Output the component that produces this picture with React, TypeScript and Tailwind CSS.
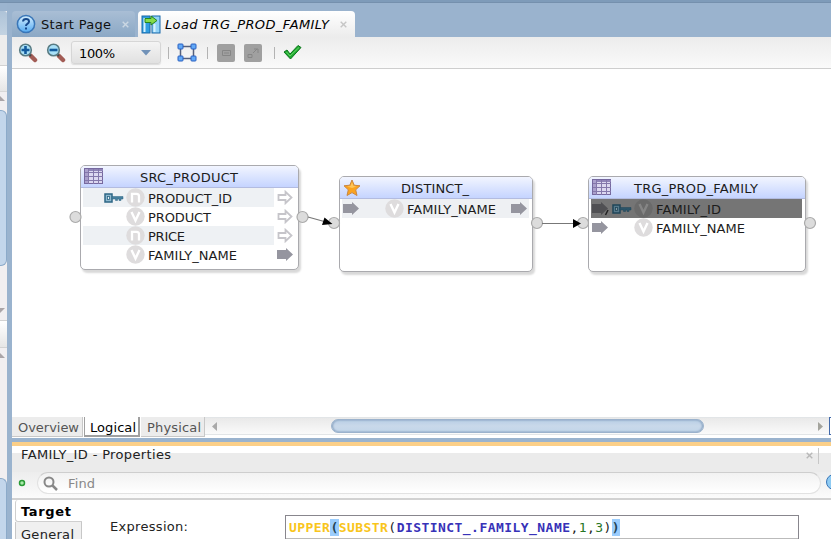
import type { ReactNode } from "react";

type TProps = { children: ReactNode; w: number; className?: string };

/* Single line label scaled to an exact advance width */
function Label({ children, w, className = "" }: TProps) {
  return (
    <svg width={w} height="20" className={`block shrink-0 overflow-visible ${className}`}>
      <text x="0" y="15" textLength={w} lengthAdjust="spacing" fill="currentColor">
        {children}
      </text>
    </svg>
  );
}

function TableIcon() {
  return (
    <svg width="20" height="17" viewBox="0 0 20 17" className="block">
      <rect x=".5" y=".5" width="18" height="15" fill="#dcd8f0" stroke="#76699f" />
      <rect x="1" y="1" width="18" height="2" fill="#9085b8" />
      <rect x="1" y="1" width="3" height="14" fill="#aaa0cc" />
      <path d="M4.500 1v15M9.500 1v15M14.500 1v15M1 4.500h18M1 8.500h18M1 12.500h18" stroke="#8478ab" />
    </svg>
  );
}

function Star() {
  return (
    <svg width="18" height="18" viewBox="0 0 18 18" className="block">
      <path d="M9 1l2.200 5.200 5.800.6-4.300 4 1.300 5.700L9 13.600 4 16.500l1.300-5.700L1 6.800l5.800-.6z" fill="#fba31f" stroke="#c98743" strokeWidth="1" />
      <path d="M9 3l1.500 4 3 .5L9 9 4 7.500 7.500 7z" fill="#ffc65a" />
    </svg>
  );
}

function Arrow({ hollow = false, dark = false }: { hollow?: boolean; dark?: boolean }) {
  return (
    <svg width="17" height="15" viewBox="0 0 17 15" className="block">
      {hollow ? (
        <path d="M1.500 5h7V1.800L14.500 7.500l-6 5.700V10h-7z" fill="#fff" stroke="#c6c5ca" strokeWidth="1.800" />
      ) : (
        <path d="M0 3h9V1l7 6.500L9 14v-2H0z" fill={dark ? "#505053" : "#95959f"} />
      )}
      {dark && <path d="M16 9l-2.500 5" stroke="#222" strokeWidth="1.500" />}
    </svg>
  );
}

function KeyIcon({ dark = false }: { dark?: boolean }) {
  const line = dark ? "#1f4558" : "#2c6685";
  return (
    <svg width="20" height="12" viewBox="0 0 20 12" className="block">
      <rect x="1" y="2" width="7" height="8" fill={dark ? "#55788a" : "#8eb9cf"} stroke={line} strokeWidth="1.500" />
      <rect x="3.500" y="4.500" width="2" height="3" fill={dark ? "#8a9aa2" : "#e8f3f8"} stroke={line} strokeWidth=".8" />
      <path d="M8 4.500h11v2.500h-2v1.500h-2V7h-1.500v1.500h-2V7H8z" fill={dark ? "#2c5468" : "#467f9d"} stroke={line} strokeWidth=".5" />
    </svg>
  );
}

function TypeBadge({ kind, dark = false }: { kind: "n" | "v"; dark?: boolean }) {
  return (
    <svg width="19" height="19" viewBox="0 0 19 19" className="block">
      <circle cx="9.500" cy="9.500" r="9.200" fill={dark ? "#6a6a6a" : "#dedcdd"} />
      {kind === "n" ? (
        <path d="M6 14.500V5.800h4.500q2.500 0 2.500 2.500v6.200" fill="none" stroke="#fff" strokeWidth="2.300" />
      ) : (
        <path d="M5.500 5l4 8.500 4-8.500" fill="none" stroke={dark ? "#858585" : "#fff"} strokeWidth="2.400" />
      )}
    </svg>
  );
}

type Row = {
  name: string;
  w: number;
  kind: "n" | "v";
  keyed?: boolean;
  input?: boolean;
  output?: "hollow" | "solid";
  band?: string;
  bandW?: string;
  dark?: boolean;
};

function Node({ place, title, titleW, icon, rows }: { place: string; title: string; titleW: number; icon: ReactNode; rows: Row[] }) {
  return (
    <div className={`absolute flex flex-col overflow-hidden rounded-[5px] border-[1.500px] border-[#aaaaae] bg-white shadow-[2px_3px_2px_#d9d9d9] ${place}`}>
      <div className="relative flex h-[22px] shrink-0 items-center justify-center border-b border-[#b3bce0] bg-linear-to-b from-[#f2f5ff] to-[#c5d4ff] pr-[2px]">
        <div className="absolute top-[2px] left-[3px]">{icon}</div>
        <Label w={titleW}>{title}</Label>
      </div>
      {rows.map((r) => (
        <div key={r.name} className="relative flex h-[19px] shrink-0 items-center">
          <div className={`absolute inset-y-0 left-[2px] ${r.bandW ?? "right-[3px]"} ${r.band ?? ""}`} />
          <div className="relative flex w-[67px] shrink-0 items-center justify-end">
            {r.input && <div className="mr-auto ml-[3px]"><Arrow dark={r.dark} /></div>}
            {r.keyed && <KeyIcon dark={r.dark} />}
            <div className="mr-[3px] ml-[2px]"><TypeBadge kind={r.kind} dark={r.dark} /></div>
          </div>
          <Label w={r.w} className="relative">{r.name}</Label>
          {r.output && <div className="relative mr-[4px] ml-auto"><Arrow hollow={r.output === "hollow"} /></div>}
        </div>
      ))}
    </div>
  );
}

function ZoomIcon({ plus = false }: { plus?: boolean }) {
  return (
    <svg width="20" height="20" viewBox="0 0 20 20" className="block">
      <path d="M13 13l4 4" stroke="#a25c55" strokeWidth="4.500" strokeLinecap="round" />
      <path d="M11 11l2 2" stroke="#444" strokeWidth="2" />
      <circle cx="7.500" cy="7" r="5.800" fill="#a9e1f8" stroke="#587b83" strokeWidth="1.600" />
      <path d={plus ? "M3.500 7h8M7.500 3v8" : "M3.500 7h8"} stroke="#125a9c" strokeWidth="2.600" />
    </svg>
  );
}

function HelpIcon() {
  return (
    <svg width="20" height="20" viewBox="0 0 20 20" className="block">
      <defs>
        <linearGradient id="help" x2="0" y2="1"><stop stopColor="#d6efff" /><stop offset="1" stopColor="#54aaf2" /></linearGradient>
      </defs>
      <circle cx="10" cy="10" r="8.600" fill="url(#help)" stroke="#3976b8" strokeWidth="1.500" />
      <path d="M7 7.500Q7.200 5 10 5t3 2.400q0 1.500-1.600 2.400Q10 10.600 10 12M10 13.500v2" fill="none" stroke="#17498c" strokeWidth="2" />
    </svg>
  );
}

function MapIcon() {
  return (
    <svg width="20" height="20" viewBox="0 0 20 20" className="block">
      <rect x="1" y="2" width="8" height="17" fill="#319ee0" stroke="#1667a8" />
      <rect x="11" y="2" width="8" height="17" fill="#91d2f7" stroke="#1667a8" />
      <path d="M3.500 4v14M13.500 10v8" stroke="#d6f2ff" strokeWidth="2" />
      <path d="M4 4.500h6V2l6 4.500-6 4.500V8.500H4z" fill="#86dd4a" stroke="#258521" />
    </svg>
  );
}

function FrameIcon() {
  const corners = [[1, 1], [14, 1], [1, 13], [14, 13]];
  return (
    <svg width="20" height="19" viewBox="0 0 20 19" className="block">
      <path d="M3.500 3.500h13v12h-13z" fill="none" stroke="#56617d" strokeWidth="1.500" />
      {corners.map(([x, y]) => <rect key={`${x}-${y}`} x={x} y={y} width="5" height="5" rx=".8" fill="#62a9f7" stroke="#285fc0" />)}
    </svg>
  );
}

function Close({ color, className = "" }: { color: string; className?: string }) {
  return <svg width="7" height="7" viewBox="0 0 7 7" className={className}><path d="M.7.7l5.600 5.600M6.300.7L.7 6.300" stroke={color} strokeWidth="1.400" /></svg>;
}

function LeftStrip() {
  return (
    <div className="flex w-[7px] shrink-0 flex-col overflow-hidden bg-[#f1eff1]">
      <div className="h-[8px] shrink-0 bg-[#9bb4cf]" />
      <div className="h-[24px] shrink-0 rounded-tr-[3px] bg-linear-to-b from-[#aec3d8] to-[#c3d3e2]" />
      <div className="h-[31px] shrink-0 border-b border-[#d2d2d2] bg-[#ededed]" />
      <div className="h-[26px] shrink-0 border-b border-[#d8d8d8] bg-linear-to-b from-white to-[#e6e6e6]" />
      <div className="flex h-[18px] shrink-0 items-start pt-[4px]"><svg width="5" height="5"><path d="M0 0l5 5H0z" fill="#aaa5a8" /></svg></div>
      <div className="h-[156px] w-[7px] shrink-0 rounded-r-[6px] border border-l-0 border-[#8caac9] bg-[#c3d6eb]" />
      <div className="flex h-[54px] shrink-0 items-end pb-[7px]"><svg width="5" height="5"><path d="M0 0h5L0 5z" fill="#aaa5a8" /></svg></div>
      <div className="h-[28px] shrink-0 border-y border-[#d2d2d2] bg-linear-to-b from-white to-[#e6e6e6]" />
      <div className="flex h-[14px] shrink-0 items-center"><svg width="5" height="5"><path d="M0 0l5 5H0z" fill="#aaa5a8" /></svg></div>
      <div className="h-[116px] shrink-0" />
      <div className="flex-1 rounded-tr-[6px] border-t border-r border-[#8caac9] bg-[#c3d6eb]" />
    </div>
  );
}

export default function App() {
  return (
    <div className="flex h-[539px] w-[831px] flex-col overflow-hidden bg-[#9ab3ce] font-['DejaVu_Sans',sans-serif] text-[13px] text-[#222]">
      <div className="h-[3px] shrink-0 border-b border-[#7590ad] bg-[#7e9bb9]" />
      <div className="flex min-h-0 flex-1">
        <LeftStrip />
        <div className="w-[5px] shrink-0" />
        <main className="flex min-w-0 flex-1 flex-col">
          <div className="flex h-[34px] shrink-0 items-end">
            <div className="flex h-[26px] w-[123px] items-center rounded-t-[4px] bg-linear-to-b from-[#a9bed5] to-[#8ba8c5] pl-[4px]">
              <HelpIcon />
              <Label w={70} className="ml-[5px] text-[#111]">Start Page</Label>
              <Close color="#cbd7e3" className="ml-[11px]" />
            </div>
            <div className="ml-[3px] flex h-[26px] w-[217px] items-center rounded-t-[4px] bg-linear-to-b from-white to-[#ececec] pl-[3px]">
              <MapIcon />
              <Label w={164} className="ml-[4px] text-black italic">Load TRG_PROD_FAMILY</Label>
              <Close color="#c6c6c6" className="ml-[11px]" />
            </div>
          </div>
          <div className="flex h-[32px] shrink-0 items-center border-b border-[#cecece] bg-linear-to-b from-[#ececec] to-[#fafafa] pl-[6px]">
            <ZoomIcon plus />
            <div className="ml-[8px]"><ZoomIcon /></div>
            <div className="ml-[5px] flex h-[23px] w-[90px] items-center rounded-[3px] border border-[#d6d6d6] bg-linear-to-b from-[#f4f4f4] to-[#e1e1e1] pl-[7px] shadow-[0_1px_1px_#ddd]">
              <Label w={36} className="text-black">100%</Label>
              <svg width="10" height="6" className="ml-[26px]"><path d="M0 0h10L5 5.500z" fill="#7192b8" /></svg>
            </div>
            <div className="ml-[7px] h-[12px] w-px bg-[#b3b3b3]" />
            <div className="ml-[8px]"><FrameIcon /></div>
            <div className="ml-[10px] h-[12px] w-px bg-[#b3b3b3]" />
            <svg width="18" height="18" className="ml-[9px]"><rect width="18" height="18" rx="2" fill="#a0a0a0" /><path d="M5.500 6.500h8v5h-8zM7 9h5" fill="none" stroke="#868686" /></svg>
            <svg width="18" height="18" className="ml-[9px]"><rect width="18" height="18" rx="2" fill="#a0a0a0" /><path d="M4 10.500h4v3H4zM9 9l4-4m-3 0h4v4" fill="none" stroke="#868686" /></svg>
            <div className="ml-[12px] h-[12px] w-px bg-[#b3b3b3]" />
            <svg width="19" height="17" className="ml-[8px]"><path d="M1 8l3-2 3 4L15 1.500l3 2L7.500 15z" fill="#20a931" stroke="#0b751b" /><path d="M3.500 8L7 12l9-8.500" fill="none" stroke="#65d666" /></svg>
          </div>

          <section className="relative h-[348px] shrink-0 bg-white text-[#1c1c1c]">
            <Node
              place="top-[96px] left-[68px] h-[105px] w-[219px]" title="SRC_PRODUCT" titleW={98} icon={<TableIcon />}
              rows={[
                { name: "PRODUCT_ID", w: 84, kind: "n", keyed: true, output: "hollow", band: "bg-[#eef1f4]", bandW: "right-[24px]" },
                { name: "PRODUCT", w: 63, kind: "v", output: "hollow" },
                { name: "PRICE", w: 37, kind: "n", output: "hollow", band: "bg-[#eef1f4]", bandW: "right-[24px]" },
                { name: "FAMILY_NAME", w: 89, kind: "v", output: "solid" },
              ]}
            />
            <Node
              place="top-[107px] left-[327px] h-[96px] w-[194px]" title="DISTINCT_" titleW={68} icon={<Star />}
              rows={[{ name: "FAMILY_NAME", w: 89, kind: "v", input: true, output: "solid", band: "bg-[#eef0f3]" }]}
            />
            <Node
              place="top-[107px] left-[576px] h-[96px] w-[218px]" title="TRG_PROD_FAMILY" titleW={124} icon={<TableIcon />}
              rows={[
                { name: "FAMILY_ID", w: 65, kind: "v", keyed: true, input: true, dark: true, band: "bg-[#757575]" },
                { name: "FAMILY_NAME", w: 89, kind: "v", input: true },
              ]}
            />
            <svg width="819" height="348" className="pointer-events-none absolute inset-0">
              <g fill="#dcdcdc" stroke="#aaa" strokeWidth="1.200">
                <circle cx="63.500" cy="148" r="5.500" /><circle cx="290.500" cy="148" r="5.500" /><circle cx="322" cy="154" r="5.500" />
                <circle cx="525" cy="154" r="5.500" /><circle cx="571" cy="154" r="5.500" /><circle cx="798" cy="154" r="5.500" />
              </g>
              <path d="M296 148l18 5M530 154.500h32" stroke="#777" strokeWidth="1.200" />
              <path d="M312.500 148.500l8 6.500-10.500 1zM561 150l8 4.500-8 4.500z" fill="#000" />
            </svg>
          </section>

          <div className="flex h-[21px] shrink-0 items-start bg-white text-[#555]">
            <div className="flex h-[20px] w-[71px] items-center justify-center border-r border-b border-[#c8c8c8] bg-[#ececec] pl-[2px]"><Label w={61}>Overview</Label></div>
            <div className="ml-[1px] flex h-[20px] w-[56px] items-center justify-center border-r-2 border-b-2 border-l border-[#a0a0a0] bg-white pt-[2px] pl-[2px] text-black"><Label w={46}>Logical</Label></div>
            <div className="ml-[1px] flex h-[20px] w-[64px] items-center justify-center border-r border-b border-[#c8c8c8] bg-[#ececec] pl-[2px]"><Label w={54}>Physical</Label></div>
            <div className="flex h-[18px] flex-1 items-center border-y border-[#e2e5e7] bg-linear-to-b from-[#e9e9e9] to-[#fafafa] pl-[7px]">
              <svg width="5" height="9"><path d="M5 0v9L0 4.500z" fill="#a9a9a9" /></svg>
              <div className="ml-[114px] h-[14px] w-[373px] rounded-full border border-[#9bb2cc] bg-linear-to-b from-[#b9cee5] via-[#c9d9ea] to-[#c2d5e9] shadow-[inset_1px_0_2px_#8ba5c2,inset_-1px_0_2px_#8ba5c2]" />
              <svg width="5" height="9" className="ml-[114px]"><path d="M0 0v9l5-4.500z" fill="#a4a49d" /></svg>
            </div>
            <div className="h-[18px] w-[2px] border-y border-l border-[#426aab] bg-white" />
          </div>
          <div className="h-[4px] shrink-0 bg-[#9ab3ce]" />
          <div className="h-[4px] shrink-0 bg-[#fbcf88]" />
          <div className="h-[7px] shrink-0 bg-white" />
          <div className="flex h-[19px] shrink-0 items-start bg-[#ebebeb] pl-[9px] text-[#222]">
            <Label w={150} className="-mt-[9px]">FAMILY_ID - Properties</Label>
            <Close color="#b8b8b8" className="-mt-[1px] ml-auto" />
            <div className="-mt-[5px] mr-[12px] ml-[5px] h-[16px] w-px bg-[#c7c7c7]" />
          </div>
          <div className="flex h-[28px] shrink-0 items-start border-b-2 border-[#d2d2d2] bg-linear-to-b from-[#ededed] to-[#fbfbfb] pl-[6px]">
            <svg width="8" height="8" className="mt-[7px] shrink-0"><circle cx="4" cy="4" r="2.500" fill="#a9e9aa" stroke="#299a35" strokeWidth="1.500" /></svg>
            <div className="ml-[11px] flex h-[22px] w-[784px] shrink-0 items-center rounded-full border border-[#e2e2e2] border-t-[#cecece] bg-linear-to-b from-[#f2f2f2] to-white pl-[5px] text-[#888]">
              <svg width="15" height="15"><circle cx="6" cy="6" r="4.500" fill="none" stroke="#888" strokeWidth="2" /><path d="M9.500 9.500L14 14" stroke="#888" strokeWidth="2.500" /></svg>
              <Label w={27} className="ml-[10px]">Find</Label>
            </div>
            <div className="mt-[2px] ml-[5px] h-[16px] w-[16px] shrink-0 rounded-full border border-[#3976b8] bg-[#8fcbf3]" />
          </div>
          <div className="flex min-h-0 flex-1 bg-white">
            <div className="flex w-[73px] shrink-0 flex-col pl-[3px]">
              <div className="flex h-[22px] w-[67px] shrink-0 items-center rounded-l-[3px] border-b border-l border-[#cfcfcf] bg-white pl-[5px] font-bold text-black"><Label w={50}>Target</Label></div>
              <div className="flex h-[24px] w-[67px] shrink-0 items-center border-r border-l border-[#c7c7c7] bg-[#f0f0f0] pl-[5px]"><Label w={53}>General</Label></div>
            </div>
            <div className="pt-[16px] pl-[24px] text-[#222]"><Label w={78} className="ml-[1px]">Expression:</Label></div>
            <div className="mt-[15px] ml-[97px] flex h-[24px] w-[514px] flex-col border border-[#88868d] bg-white font-['DejaVu_Sans_Mono',monospace] text-[13px] font-bold">
              <div className="flex h-[23px] shrink-0 items-center border-b border-[#bbb] pl-[3px] leading-[17px] tracking-[0.450px]">
                <span className="text-[#f9c51b]">UPPER</span><span className="bg-[#9bcdfd] text-[#245]">(</span>
                <span className="text-[#f9c51b]">SUBSTR</span><span className="font-normal">(</span>
                <span className="text-[#3732b8]">DISTINCT_.FAMILY_NAME</span>
                <span className="font-normal">,</span><span className="font-normal text-[#287525]">1</span>
                <span className="font-normal">,</span><span className="font-normal text-[#287525]">3</span>
                <span className="font-normal">)</span><span className="bg-[#9bcdfd] text-[#245]">)</span>
              </div>
            </div>
          </div>
        </main>
      </div>
    </div>
  );
}
